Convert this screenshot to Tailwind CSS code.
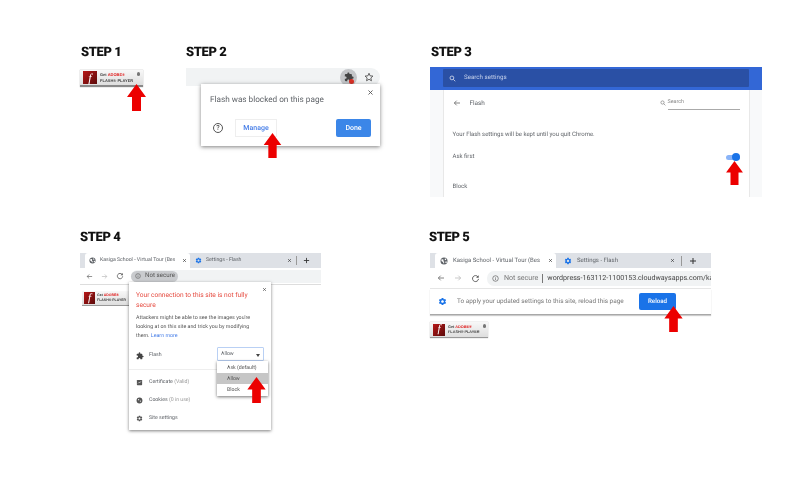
<!DOCTYPE html>
<html><head><meta charset="utf-8">
<script src="https://cdn.jsdelivr.net/npm/@tailwindcss/browser@4"></script>
</head>
<body>
<svg class="hidden" width="0" height="0">
<defs>
<symbol id="arrow" viewBox="0 0 19 27"><polygon points="9.5,0 19,13 14,13 14,27 5,27 5,13 0,13" fill="#ec0000"/></symbol>
<symbol id="gear" viewBox="0 0 24 24"><path d="M19.14 12.94c.04-.3.06-.61.06-.94 0-.32-.02-.64-.07-.94l2.03-1.58c.18-.14.23-.41.12-.61l-1.92-3.32c-.12-.22-.37-.29-.59-.22l-2.39.96c-.5-.38-1.03-.7-1.62-.94l-.36-2.54c-.04-.24-.24-.41-.48-.41h-3.84c-.24 0-.43.17-.47.41l-.36 2.54c-.59.24-1.13.57-1.62.94l-2.39-.96c-.22-.08-.47 0-.59.22L2.74 8.87c-.12.21-.08.47.12.61l2.03 1.58c-.05.3-.09.63-.09.94s.02.64.07.94l-2.03 1.58c-.18.14-.23.41-.12.61l1.92 3.32c.12.22.37.29.59.22l2.39-.96c.5.38 1.03.7 1.62.94l.36 2.54c.05.24.24.41.48.41h3.84c.24 0 .44-.17.47-.41l.36-2.54c.59-.24 1.13-.56 1.62-.94l2.39.96c.22.08.47 0 .59-.22l1.92-3.32c.12-.22.07-.47-.12-.61l-2.01-1.58zM12 15.6c-1.98 0-3.6-1.62-3.6-3.6s1.62-3.6 3.6-3.6 3.6 1.62 3.6 3.6-1.62 3.6-3.6 3.6z" fill="currentColor"/></symbol>
<symbol id="puzzle" viewBox="0 0 24 24"><path d="M20.5 11H19V7c0-1.1-.9-2-2-2h-4V3.5C13 2.12 11.88 1 10.5 1S8 2.12 8 3.5V5H4c-1.1 0-1.99.9-1.99 2v3.8H3.5c1.49 0 2.7 1.21 2.7 2.7s-1.21 2.7-2.7 2.7H2V20c0 1.1.9 2 2 2h3.8v-1.5c0-1.49 1.21-2.7 2.7-2.7 1.49 0 2.7 1.21 2.7 2.7V22H17c1.1 0 2-.9 2-2v-4h1.5c1.38 0 2.5-1.12 2.5-2.5S21.88 11 20.5 11z" fill="currentColor"/></symbol>
<symbol id="close" viewBox="0 0 24 24"><path d="M5 5l14 14M19 5L5 19" stroke="currentColor" stroke-width="3" fill="none"/></symbol>
<symbol id="search" viewBox="0 0 24 24"><circle cx="10" cy="10" r="6.5" stroke="currentColor" stroke-width="2.6" fill="none"/><path d="M15 15l6.5 6.5" stroke="currentColor" stroke-width="2.6"/></symbol>
<symbol id="back" viewBox="0 0 24 24"><path d="M21 12H4M11 5l-7 7 7 7" stroke="currentColor" stroke-width="2.4" fill="none"/></symbol>
<symbol id="forward" viewBox="0 0 24 24"><path d="M3 12h17M13 5l7 7-7 7" stroke="currentColor" stroke-width="2.4" fill="none"/></symbol>
<symbol id="reload" viewBox="0 0 24 24"><path d="M18.5 7.5A8 8 0 1 0 20 13" stroke="currentColor" stroke-width="2.4" fill="none"/><path d="M20.5 3v7h-7z" fill="currentColor"/></symbol>
<symbol id="globe" viewBox="0 0 24 24"><circle cx="12" cy="12" r="10.5" fill="#5f6368"/><path d="M5 6l6 2-1 4 3 3-2 5-2-5-5-3zM15 4l4 3-2 3-3-2zM17 13l4 1-2 5-3-2z" fill="#fff"/></symbol>
<symbol id="info" viewBox="0 0 24 24"><circle cx="12" cy="12" r="9.5" stroke="currentColor" stroke-width="2.2" fill="none"/><path d="M12 11v6M12 7v2" stroke="currentColor" stroke-width="2.2"/></symbol>
</defs>
</svg>

<main class="relative w-[800px] h-[480px] overflow-hidden bg-white font-['Roboto',sans-serif] text-[#5f6368] blur-[0.4px] [text-rendering:geometricPrecision]">

<!-- STEP 1 -->
<section class="absolute left-[81px] top-[42px]">
  <h2 class="text-[13px] leading-[22px] font-black tracking-[-0.4px] text-[#111]">STEP 1</h2>
  <div class="relative -ml-px mt-[6px] flex h-[17px] w-[63px] items-center gap-[3px] border-b-2 border-b-[#8a8a8a] bg-gradient-to-b from-[#f8f8f8] to-[#dedede] pl-[3px] shadow-[0_0_1px_#999]">
    <span class="flex h-[13px] w-[14px] items-center justify-center bg-gradient-to-br from-[#b81818] to-[#5c0a0a] font-['Liberation_Serif',serif] text-[12px] italic leading-none text-white">f</span>
    <span class="flex flex-col font-['Liberation_Sans',sans-serif] text-[4px] font-bold leading-[6px] text-[#444]"><span>Get <span class="text-[#e02020]">ADOBE®</span></span><span>FLASH® PLAYER</span></span>
    <span class="absolute right-[3px] top-[2px] h-[4px] w-[3px] rounded-full bg-[#777]"></span>
  </div>
</section>
<svg class="absolute left-[127px] top-[84px] h-[27px] w-[19px]"><use href="#arrow"/></svg>

<!-- STEP 2 -->
<section class="absolute left-[186px] top-[42px] w-[194px]">
  <h2 class="text-[13px] leading-[22px] font-black tracking-[-0.4px] text-[#111]">STEP 2</h2>
  <div class="mt-[4px] flex h-[18px] items-center justify-end gap-[7px] rounded-r-[9px] bg-[#f1f3f4] pr-[6px]">
    <span class="relative flex h-[17px] w-[17px] items-center justify-center rounded-full bg-[#c4c6c9] text-[#444]">
      <svg class="h-[10px] w-[10px]"><use href="#puzzle"/></svg>
      <span class="absolute bottom-[2px] right-[3px] h-[5px] w-[5px] rounded-full bg-[#d93025]"></span>
    </span>
    <svg class="h-[10px] w-[10px] text-[#555]" viewBox="0 0 24 24"><path d="M12 3l2.7 6.2 6.8.6-5.1 4.5 1.5 6.7-5.9-3.5-5.9 3.5 1.5-6.7-5.1-4.5 6.8-.6z" fill="none" stroke="currentColor" stroke-width="2.2"/></svg>
  </div>
</section>
<div class="absolute left-[201px] top-[84px] flex h-[62px] w-[179px] flex-col justify-between bg-white px-[9px] pb-[9px] pt-[10px] shadow-[0_1px_4px_rgba(0,0,0,0.5)]">
  <div class="flex items-start justify-between">
    <span class="text-[8.2px] leading-[12px] text-[#5f6368]">Flash was blocked on this page</span>
    <svg class="-mr-[3px] -mt-[5px] h-[7px] w-[7px] text-[#555]"><use href="#close"/></svg>
  </div>
  <div class="flex items-center">
    <span class="ml-[3px] flex h-[10px] w-[10px] items-center justify-center rounded-full border border-[#555] text-[7px] font-medium leading-none text-[#555]">?</span>
    <span class="ml-[12px] flex h-[18px] w-[42px] items-center justify-center border border-[#eee] text-[7px] font-medium text-[#4a80e8]">Manage</span>
    <span class="ml-auto flex h-[18px] w-[35px] items-center justify-center rounded-[2px] bg-[#3b86e8] text-[7px] font-medium text-white">Done</span>
  </div>
</div>
<svg class="absolute left-[263px] top-[133px] h-[25px] w-[19px]" preserveAspectRatio="none"><use href="#arrow"/></svg>

<!-- STEP 3 -->
<section class="absolute left-[431px] top-[42px] w-[332px]">
  <h2 class="text-[13px] leading-[22px] font-black tracking-[-0.4px] text-[#111]">STEP 3</h2>
  <div class="-ml-px mt-[3px] w-[332px]">
    <div class="flex h-[23px] items-start bg-[#3367d6] px-[13px] pt-[2px]">
      <div class="flex h-[18px] w-full items-center gap-[8px] rounded-[1px] bg-[#2a50a5] pl-[6px] text-[6.2px] text-[#c4d0ea]">
        <svg class="h-[7px] w-[7px] text-[#e4e9f5]"><use href="#search"/></svg>
        <span>Search settings</span>
      </div>
    </div>
    <div class="flex h-[107px] justify-center bg-[#f8f9fa]">
      <div class="flex w-[307px] flex-col border-x border-[#e8e8e8] bg-white px-[9px] text-[6px] leading-[10px] text-[#5f6368]">
        <div class="flex h-[26px] items-center">
          <svg class="h-[8px] w-[8px] text-[#666]"><use href="#back"/></svg>
          <span class="ml-[9px] text-[6.4px]">Flash</span>
          <svg class="ml-auto h-[6px] w-[6px] text-[#777]"><use href="#search"/></svg>
          <span class="ml-[2px] w-[72px] border-b border-[#aaa] pb-[2px] text-[5.4px] text-[#888]">Search</span>
        </div>
        <p class="mt-[14px]">Your Flash settings will be kept until you quit Chrome.</p>
        <div class="mt-[12px] flex items-center justify-between">
          <span>Ask first</span>
          <span class="relative block h-[5px] w-[14px] rounded-full bg-[#8ab4f8]"><span class="absolute -top-[1.5px] right-0 h-[8px] w-[8px] rounded-full bg-[#1a73e8]"></span></span>
        </div>
        <span class="mt-[20px]">Block</span>
      </div>
    </div>
  </div>
</section>
<svg class="absolute left-[725px] top-[161px] h-[24px] w-[19px]" preserveAspectRatio="none"><use href="#arrow"/></svg>

<!-- STEP 4 -->
<section class="absolute left-[80px] top-[227px] w-[241px]">
  <h2 class="text-[13px] leading-[22px] font-black tracking-[-0.4px] text-[#111]">STEP 4</h2>
  <div class="mt-[4px] flex h-[15px] items-stretch bg-[#dee1e6] pl-[5px] text-[5.2px]">
    <div class="flex w-[105px] items-center rounded-t-[3px] bg-white pl-[4px] pr-[3px]">
      <svg class="h-[7px] w-[7px] shrink-0"><use href="#globe"/></svg>
      <span class="ml-[4px] w-[76px] overflow-hidden whitespace-nowrap">Kasiga School - Virtual Tour (Bes</span>
      <svg class="ml-auto h-[5px] w-[5px] text-[#333]"><use href="#close"/></svg>
    </div>
    <div class="flex flex-1 items-center pl-[5px] pr-[11px]">
      <svg class="h-[7px] w-[7px] text-[#1a73e8]"><use href="#gear"/></svg>
      <span class="ml-[4px]">Settings - Flash</span>
      <svg class="ml-auto h-[5px] w-[5px] text-[#333]"><use href="#close"/></svg>
      <span class="ml-[4px] h-[9px] w-px bg-[#999]"></span>
      <svg class="ml-[6px] h-[7px] w-[7px] text-[#333]" viewBox="0 0 24 24"><path d="M12 3v18M3 12h18" stroke="currentColor" stroke-width="3"/></svg>
    </div>
  </div>
  <div class="flex h-[17px] items-center gap-[8px] border-b border-[#ddd] pl-[6px]">
    <svg class="h-[7px] w-[7px] text-[#666]"><use href="#back"/></svg>
    <svg class="h-[7px] w-[7px] text-[#bbb]"><use href="#forward"/></svg>
    <svg class="h-[8px] w-[8px] text-[#555]"><use href="#reload"/></svg>
    <div class="-ml-[1px] flex h-[13px] flex-1 items-center rounded-l-[7px] bg-[#f1f3f4]">
      <span class="flex h-[11px] w-[47px] items-center gap-[4px] rounded-full bg-[#c9cbce] pl-[4px] text-[6.2px] text-[#555]"><svg class="h-[6px] w-[6px]"><use href="#info"/></svg>Not secure</span>
    </div>
  </div>
  <div class="relative ml-[2px] mt-[6px] flex h-[15px] w-[51px] items-center gap-[2px] border-b border-b-[#999] bg-gradient-to-b from-[#f8f8f8] to-[#dedede] pl-[2px]">
    <span class="flex h-[12px] w-[11px] shrink-0 items-center justify-center bg-gradient-to-br from-[#b81818] to-[#5c0a0a] font-['Liberation_Serif',serif] text-[11px] italic leading-none text-white">f</span>
    <span class="flex flex-col font-['Liberation_Sans',sans-serif] text-[3.5px] font-bold leading-[5px] text-[#444]"><span>Get <span class="text-[#e02020]">ADOBE®</span></span><span>FLASH® PLAYER</span></span>
  </div>
</section>
<div class="absolute left-[129px] top-[282px] h-[148px] w-[142px] bg-white shadow-[0_1px_3px_rgba(0,0,0,0.5)]">
  <svg class="absolute right-[4px] top-[5px] h-[5px] w-[5px] text-[#444]"><use href="#close"/></svg>
  <div class="px-[7px] pt-[8px]">
    <p class="w-[118px] text-[6.6px] leading-[10px] text-[#e5483d]">Your connection to this site is not fully secure</p>
    <p class="mt-[4px] w-[122px] text-[5.3px] leading-[9px] text-[#555]">Attackers might be able to see the images you're looking at on this site and trick you by modifying them. <span class="text-[#4a80e8]">Learn more</span></p>
  </div>
  <div class="mt-[7px] flex h-[15px] items-center pl-[7px] text-[5.2px]">
    <svg class="h-[8px] w-[8px] text-[#444]"><use href="#puzzle"/></svg>
    <span class="ml-[5px]">Flash</span>
    <div class="absolute left-[88px] top-[65px] flex h-[14px] w-[47px] items-center justify-between rounded-[1px] border border-[#b9d0f4] px-[3px] pt-[2px]"><span>Allow</span><span class="h-0 w-0 border-x-[2.5px] border-t-[3px] border-x-transparent border-t-[#444]"></span></div>
  </div>
  <div class="mt-[6px] flex w-[88px] border-t border-[#eee]"></div>
  <ul class="mt-[7px] flex flex-col gap-[8px] pl-[7px] text-[5.2px] leading-[10px]">
    <li class="flex items-center"><svg class="h-[7px] w-[7px]" viewBox="0 0 24 24"><rect x="3" y="3" width="18" height="18" rx="2" fill="#555"/><path d="M7 15l4-4 2 2 4-5" stroke="#fff" stroke-width="2" fill="none"/></svg><span class="ml-[6px]">Certificate <span class="text-[#999]">(Valid)</span></span></li>
    <li class="flex items-center"><svg class="h-[7px] w-[7px]" viewBox="0 0 24 24"><circle cx="12" cy="12" r="10" fill="#555"/><circle cx="9" cy="9" r="2" fill="#fff"/><circle cx="15" cy="14" r="2" fill="#fff"/></svg><span class="ml-[6px]">Cookies <span class="text-[#999]">(0 in use)</span></span></li>
    <li class="flex items-center"><svg class="h-[7px] w-[7px] text-[#555]"><use href="#gear"/></svg><span class="ml-[6px]">Site settings</span></li>
  </ul>
</div>
<ul class="absolute left-[217px] top-[361px] flex h-[35px] w-[51px] flex-col bg-white py-px text-[5.2px] text-[#555] shadow-[0_1px_3px_rgba(0,0,0,0.55)]">
  <li class="flex h-[11px] flex-1 items-center pl-[10px] pt-[3px]">Ask (default)</li>
  <li class="flex h-[11px] flex-1 items-center bg-[#c6c6c6] pl-[10px] pt-[2px]">Allow</li>
  <li class="flex h-[11px] flex-1 items-center pl-[10px] pt-[3px]">Block</li>
</ul>
<svg class="absolute left-[247px] top-[377px] h-[26px] w-[19px]" preserveAspectRatio="none"><use href="#arrow"/></svg>

<!-- STEP 5 -->
<section class="absolute left-[429px] top-[227px] w-[282px]">
  <h2 class="text-[13px] leading-[22px] font-black tracking-[-0.4px] text-[#111]">STEP 5</h2>
  <div class="ml-px mt-[4px] flex h-[15px] items-stretch bg-[#dee1e6] pl-[5px] text-[6px]">
    <div class="flex w-[121px] items-center rounded-t-[3px] bg-white pl-[5px] pr-[3px]">
      <svg class="h-[8px] w-[8px] shrink-0"><use href="#globe"/></svg>
      <span class="ml-[5px] w-[90px] overflow-hidden whitespace-nowrap">Kasiga School - Virtual Tour (Bes</span>
      <svg class="ml-auto h-[5px] w-[5px] text-[#333]"><use href="#close"/></svg>
    </div>
    <div class="flex flex-1 items-center pl-[8px] pr-[14px]">
      <svg class="h-[8px] w-[8px] text-[#1a73e8]"><use href="#gear"/></svg>
      <span class="ml-[5px]">Settings - Flash</span>
      <svg class="ml-auto h-[5px] w-[5px] text-[#333]"><use href="#close"/></svg>
      <span class="ml-[6px] h-[10px] w-px bg-[#999]"></span>
      <svg class="ml-[7px] h-[8px] w-[8px] text-[#333]" viewBox="0 0 24 24"><path d="M12 3v18M3 12h18" stroke="currentColor" stroke-width="3"/></svg>
    </div>
  </div>
  <div class="ml-px flex h-[21px] items-center border-b border-[#e5e5e5] pl-[7px]">
    <svg class="h-[8px] w-[8px] text-[#666]"><use href="#back"/></svg>
    <svg class="ml-[9px] h-[8px] w-[8px] text-[#bbb]"><use href="#forward"/></svg>
    <svg class="ml-[9px] h-[9px] w-[9px] text-[#555]"><use href="#reload"/></svg>
    <div class="ml-[7px] flex h-[15px] flex-1 items-center overflow-hidden whitespace-nowrap rounded-l-[7px] bg-[#f1f3f4] pl-[5px] text-[7.1px]">
      <svg class="h-[7px] w-[7px] shrink-0 text-[#555]"><use href="#info"/></svg>
      <span class="ml-[5px] text-[#777]">Not secure</span>
      <span class="mx-[4px] h-[9px] w-px shrink-0 bg-[#777]"></span>
      <span class="text-[#444]">wordpress-163112-1100153.cloudwaysapps.com/ka</span>
    </div>
  </div>
  <div class="ml-px flex h-[26px] items-center border-b border-b-[#a8a8a8] pl-[8px] shadow-[0_1px_1px_rgba(0,0,0,0.2)]">
    <svg class="h-[9px] w-[9px] shrink-0 text-[#1a73e8]"><use href="#gear"/></svg>
    <span class="ml-[10px] w-[182px] whitespace-nowrap text-[6.4px] text-[#777]">To apply your updated settings to this site, reload this page</span>
    <span class="flex h-[17px] w-[37px] items-center justify-center rounded-[2px] bg-[#1a73e8] text-[6.2px] font-medium text-white">Reload</span>
  </div>
  <div class="relative ml-px mt-[7px] flex h-[16px] w-[58px] items-center gap-[3px] border-b border-b-[#999] bg-gradient-to-b from-[#f8f8f8] to-[#dedede] pl-[3px] shadow-[0_0_1px_#aaa]">
    <span class="flex h-[12px] w-[12px] shrink-0 items-center justify-center bg-gradient-to-br from-[#b81818] to-[#5c0a0a] font-['Liberation_Serif',serif] text-[11px] italic leading-none text-white">f</span>
    <span class="flex flex-col font-['Liberation_Sans',sans-serif] text-[3.8px] font-bold leading-[5px] text-[#444]"><span>Get <span class="text-[#e02020]">ADOBE®</span></span><span>FLASH® PLAYER</span></span>
    <span class="absolute right-[2px] top-[2px] h-[4px] w-[3px] rounded-full bg-[#777]"></span>
  </div>
</section>
<svg class="absolute left-[664px] top-[306px] h-[26px] w-[19px]" preserveAspectRatio="none"><use href="#arrow"/></svg>

</main>
</body></html>
